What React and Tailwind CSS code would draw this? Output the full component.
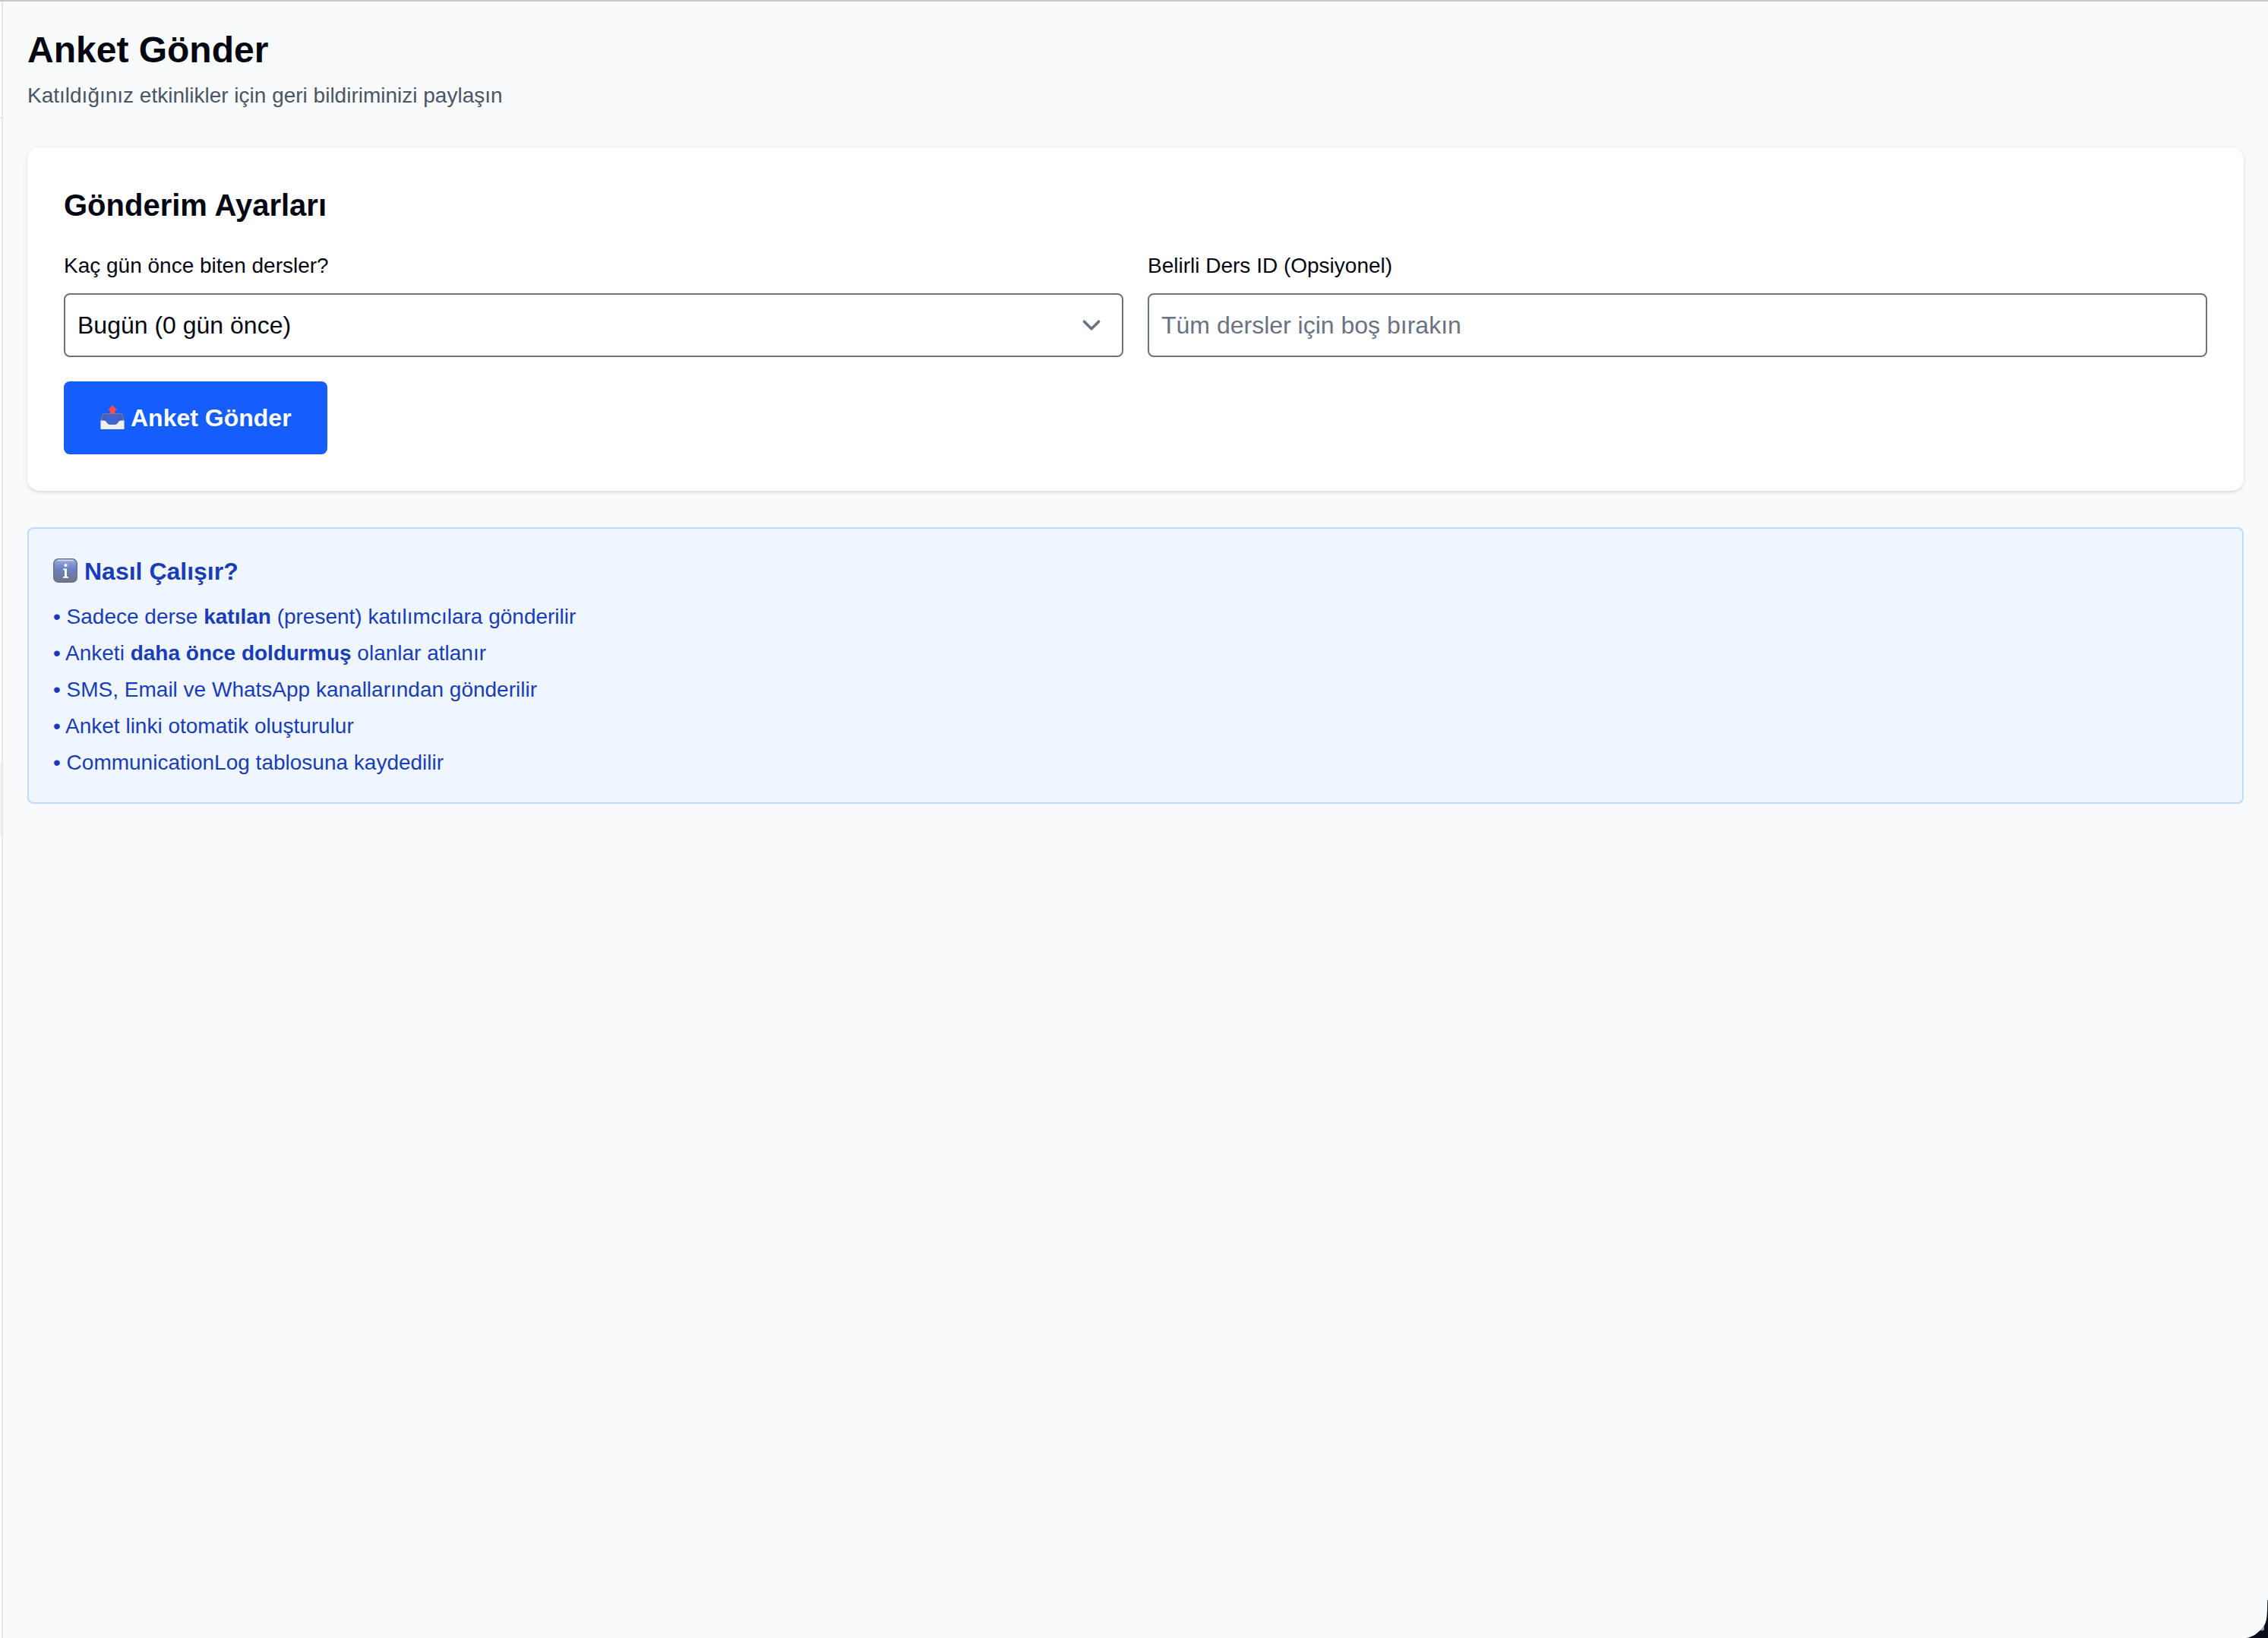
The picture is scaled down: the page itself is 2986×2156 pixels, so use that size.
import { useState } from "react"

const dayOptions = [
  { value: "0", label: "Bugün (0 gün önce)" },
  { value: "1", label: "Dün (1 gün önce)" },
  { value: "2", label: "2 gün önce" },
  { value: "7", label: "7 gün önce" },
]

function OutboxIcon() {
  return (
    <svg viewBox="0 0 32 34" className="w-8 h-[34px] shrink-0">
      <path d="M3 11h26l2.500 10v10.500H.5V21z" fill="#6f7994" />
      <path d="M4 12h24l1.500 9.500H2.500z" fill="#3a55ad" />
      <path d="M4.500 12h23l.8 5c-2.300 1-3.800 2.500-5 5-.9 2.200-2.300 3.500-4.300 3.500h-6c-2 0-3.400-1.300-4.300-3.500-1.200-2.500-2.700-4-5-5z" fill="#4163cf" />
      <path d="M.5 20.500h4.500c1.300 0 1.900.5 2.600 1.500 1.500 2.400 3 4 5.400 4h6c2.400 0 3.900-1.600 5.400-4 .7-1 1.300-1.500 2.600-1.500h4.500V31c0 .7-.3 1-1 1H1.500c-.7 0-1-.3-1-1z" fill="#eceef1" />
      <path d="M16.200 0l6.200 7h-2.900v4.800h-6.800V7H10z" fill="#fa5048" />
    </svg>
  )
}

function InfoIcon() {
  return (
    <svg viewBox="0 0 32 32" className="w-8 h-8 mb-0.5 shrink-0">
      <defs>
        <linearGradient id="infoFill" x1="0" y1="0" x2="0" y2="1">
          <stop offset="0" stopColor="#a9b6dc" />
          <stop offset="0.15" stopColor="#8c9dd4" />
          <stop offset="0.45" stopColor="#6a80c2" />
          <stop offset="1" stopColor="#6f7687" />
        </linearGradient>
      </defs>
      <rect x="0.75" y="0.75" width="30.500" height="30.500" rx="6" fill="url(#infoFill)" stroke="#6b7486" strokeWidth="1.500" />
      <path d="M6 2.500h20" stroke="#d5dcf0" strokeWidth="1.500" strokeLinecap="round" />
      <circle cx="16.500" cy="9" r="2.100" fill="#fff" />
      <path d="M13 13.500h5v10.500h2v1.800h-7V24h2v-8.700h-2z" fill="#fff" />
    </svg>
  )
}

export default function App() {
  const [days, setDays] = useState("0")
  const [lessonId, setLessonId] = useState("")

  return (
    <div className="flex min-h-screen bg-gray-50 text-gray-950 border-t-2 border-[#c9cacc] font-['Liberation_Sans',Arial,sans-serif]">
      {/* sidebar edge */}
      <div className="flex flex-col w-1 shrink-0 bg-white border-r-2 border-gray-200">
        <div className="h-[154px] border-b-2 border-gray-200" />
        <div className="h-24 mt-[848px] bg-gray-100" />
      </div>
      <main className="flex-1 p-8">
        <div className="mb-12">
          <h1 className="text-5xl leading-16 font-bold">Anket Gönder</h1>
          <p className="mt-2 text-[28px] leading-10 text-gray-600">
            Katıldığınız etkinlikler için geri bildiriminizi paylaşın
          </p>
        </div>

        <div className="mb-12 p-12 bg-white rounded-2xl shadow-[0_2px_6px_rgba(0,0,0,0.1),0_2px_4px_-2px_rgba(0,0,0,0.1)]">
          <h2 className="mb-8 text-[40px] leading-14 font-bold">Gönderim Ayarları</h2>
          <div className="grid grid-cols-2 gap-8 mb-8">
            <div>
              <label htmlFor="days" className="block mb-4 text-[28px] leading-10">
                Kaç gün önce biten dersler?
              </label>
              <div className="grid items-center">
                <select
                  id="days"
                  value={days}
                  onChange={(e) => setDays(e.target.value)}
                  className="col-start-1 row-start-1 w-full h-21 px-4 appearance-none bg-white border-2 border-gray-500 rounded-lg text-[32px] leading-12"
                >
                  {dayOptions.map((o) => (
                    <option key={o.value} value={o.value}>{o.label}</option>
                  ))}
                </select>
                <svg viewBox="0 0 20 20" fill="none" className="col-start-1 row-start-1 justify-self-end mr-[18px] size-12 pointer-events-none">
                  <path d="M6 8l4 4 4-4" stroke="#6b7280" strokeWidth="1.5" strokeLinecap="round" strokeLinejoin="round" />
                </svg>
              </div>
            </div>
            <div>
              <label htmlFor="lessonId" className="block mb-4 text-[28px] leading-10">
                Belirli Ders ID (Opsiyonel)
              </label>
              <input
                type="text"
                id="lessonId"
                value={lessonId}
                onChange={(e) => setLessonId(e.target.value)}
                placeholder="Tüm dersler için boş bırakın"
                className="block w-full h-21 px-4 bg-white border-2 border-gray-500 rounded-lg text-[32px] leading-12 placeholder:text-gray-500"
              />
            </div>
          </div>
          <button
            type="button"
            className="flex items-center gap-2 h-24 pl-12 pr-[47px] bg-[#155dfc] text-white rounded-lg text-[32px] leading-12 font-bold"
          >
            <OutboxIcon />
            Anket Gönder
          </button>
        </div>

        <div className="p-8 bg-blue-50 border-2 border-blue-200 rounded-lg text-blue-800">
          <h3 className="flex items-center gap-[9px] mb-4 text-[32px] leading-12 font-bold">
            <InfoIcon />
            Nasıl Çalışır?
          </h3>
          <ul className="space-y-2 text-[28px] leading-10">
            <li>• Sadece derse <strong>katılan</strong> (present) katılımcılara gönderilir</li>
            <li>• Anketi <strong>daha önce doldurmuş</strong> olanlar atlanır</li>
            <li>• SMS, Email ve WhatsApp kanallarından gönderilir</li>
            <li>• Anket linki otomatik oluşturulur</li>
            <li>• CommunicationLog tablosuna kaydedilir</li>
          </ul>
        </div>
      </main>

      {/* window corner */}
      <svg viewBox="0 0 30 60" className="fixed right-0 bottom-0 w-[30px] h-[60px]">
        <path d="M30 10V60H1.700C9 58.500 13 56 17.300 52 22 48.500 25 44.500 26.700 40 28.500 35 29 30 29.300 10z" fill="#090d19" />
        <path d="M20 50l5-6v5l-2 1.500z" fill="#9aa0ab" />
      </svg>
    </div>
  )
}
